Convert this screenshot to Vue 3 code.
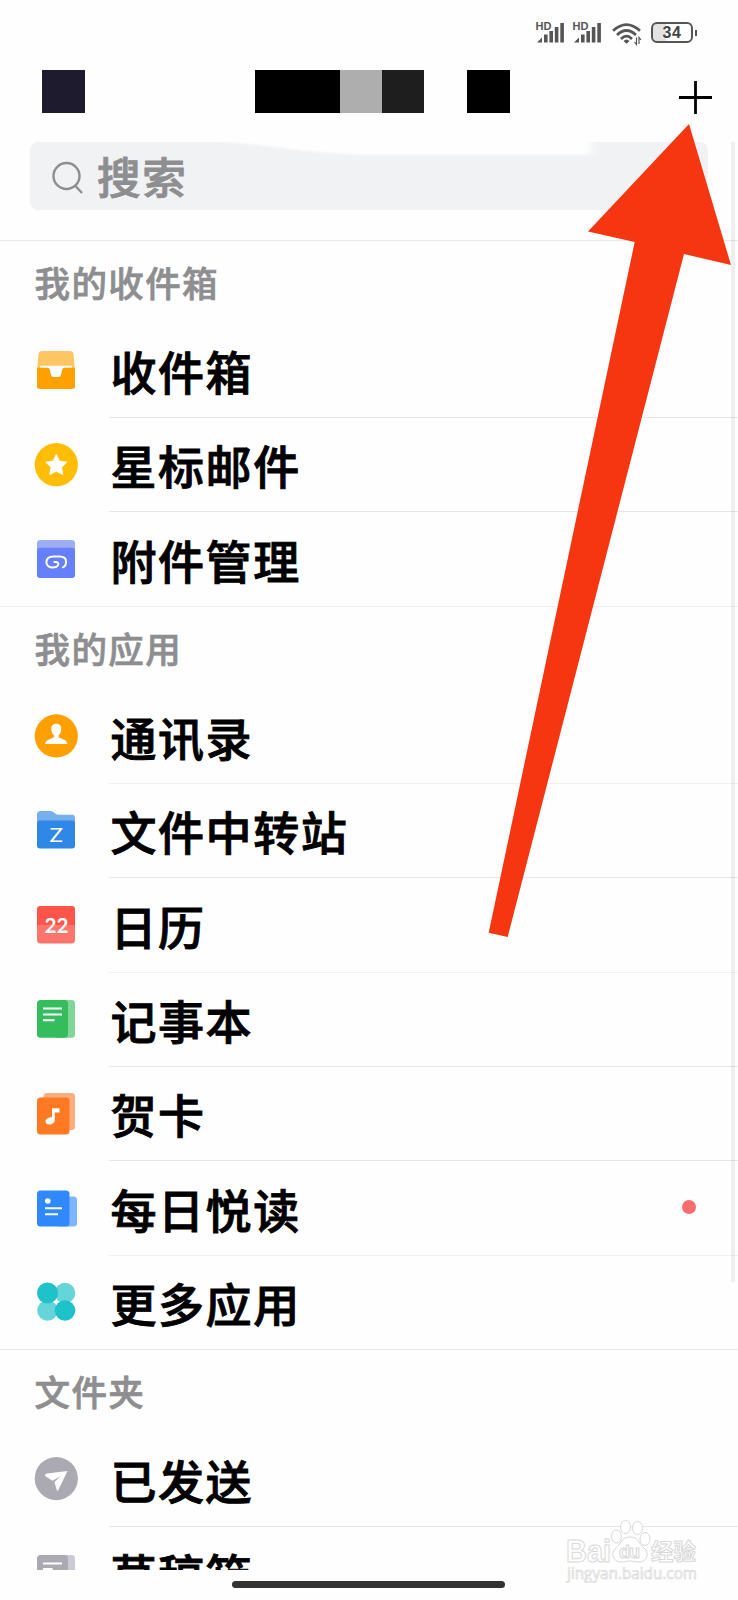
<template>
  <div class="mail-page">
    <!-- 状态栏 -->
    <div class="status-bar">
      <svg v-for="n in 2" :key="n" class="signal" viewBox="0 0 28 22">
        <text x="-0.5" y="8" class="hd" textLength="16" lengthAdjust="spacingAndGlyphs">HD</text>
        <path d="M1 20.500 6 15.500v5z" />
        <rect x="8" y="12.500" width="3.600" height="8" />
        <rect x="13.400" y="9" width="3.600" height="11.500" />
        <rect x="18.800" y="5" width="3.600" height="15.500" />
        <rect x="24.300" y="1" width="3.600" height="19.500" />
      </svg>
      <svg class="wifi" viewBox="0 0 30 24">
        <g fill="none" stroke="#555" stroke-width="2.700">
          <path d="M1 8.700Q14.500-3.500 28 8.700" />
          <path d="M5 13Q14.500 4 24 13" />
          <path d="M9 17Q14.500 11.500 20 17" />
        </g>
        <path d="M11.500 19q3-3 6 0l-3 2.800z" />
        <path d="M24.500 15.500v7l-2-2.500M27 22v-6.500l2 2.500" fill="none" stroke="#555" stroke-width="1.200" />
      </svg>
      <div class="battery"><span>34</span></div>
    </div>

    <!-- 顶部导航 -->
    <div class="nav-bar">
      <div class="block avatar"></div>
      <div class="account">
        <div class="block wide"></div>
        <div class="block light"></div>
        <div class="block dark"></div>
      </div>
      <div class="block tail"></div>
      <button class="add-btn">
        <svg viewBox="0 0 33 33"><path d="M16.500 0v33M0 16.500h33" stroke="#000" stroke-width="2.800" /></svg>
      </button>
    </div>

    <!-- 搜索框 -->
    <div class="search-wrap">
      <div class="search-box">
        <svg class="search-icon" viewBox="0 0 32 34">
          <circle cx="14.500" cy="15" r="13" />
          <path d="M23 24.500l7 7.500" />
        </svg>
        <span>搜索</span>
        <svg class="search-fade" viewBox="0 0 400 16">
          <defs>
            <filter id="soft" x="-5%" y="-50%" width="110%" height="200%"><feGaussianBlur stdDeviation="5 1" /></filter>
          </defs>
          <path d="M0-6H376V12.800H150Q100 11 60 5Q30 1 0-1z" fill="#fefefe" filter="url(#soft)" />
        </svg>
      </div>
    </div>

    <!-- 列表 -->
    <div class="list">
      <section v-for="section in sections" :key="section.title">
        <h2 class="section-title">{{ section.title }}</h2>
        <div v-for="(item, i) in section.items" :key="item.icon" class="row" :class="{ last: i === section.items.length - 1, faint: item.faint }">
          <svg class="icon" viewBox="0 0 44 44">
            <g v-if="item.icon === 'inbox'">
              <path d="M8 3h28q3 0 3.500 3l1.500 17H3L4.500 6Q5 3 8 3z" fill="#ffc562" />
              <path d="M5.500 17.800h33l-4 12H10z" fill="#fff" />
              <path d="M3 19.700h10.500q1.800 0 2.300 2l1.200 5.300q.5 2 2.500 2h5q2 0 2.500-2l1.200-5.300q.5-2 2.300-2H41V38q0 3-3 3H6q-3 0-3-3z" fill="#ff9f00" />
            </g>
            <g v-else-if="item.icon === 'star'">
              <circle cx="22.300" cy="21.700" r="21.600" fill="#ffbd05" />
              <path d="M22.300 11.500l3.200 6.700 7.300 1-5.300 5.100 1.300 7.300-6.500-3.500-6.500 3.500 1.300-7.300-5.300-5.100 7.300-1z" fill="#fff" stroke="#fff" stroke-width="1" stroke-linejoin="round" />
            </g>
            <g v-else-if="item.icon === 'attach'">
              <rect x="3" y="3" width="38" height="22" rx="3.500" fill="#9eadf6" />
              <path d="M3 14q0-3.200 3-3.200h32q3 0 3 3.200v24q0 3-3 3H6q-3 0-3-3z" fill="#6580fa" />
              <path d="M20.500 25c3-.5 4.300.8 3.800 2.600-.7 2.500-3.500 3-6.300 2.900-3.500-.2-5.800-2.500-5.600-5.600.3-3.600 3.200-5.400 7.100-5.400h6c4.200 0 6.600 2 6.600 5.300 0 2.700-1.300 4.700-3.200 5.500" fill="none" stroke="#fff" stroke-width="2" stroke-linecap="round" />
            </g>
            <g v-else-if="item.icon === 'contacts'">
              <circle cx="22.300" cy="21.900" r="21.600" fill="#ff9f00" />
              <path d="M22.300 9.800c-3.200 0-5.200 2.200-5 5.500.2 3 1.200 4.700 2.700 6v1.600c0 1.400-8.800 2-9 7.200h22.600c-.2-5.200-9-5.800-9-7.200v-1.600c1.500-1.300 2.500-3 2.700-6 .2-3.300-1.800-5.500-5-5.500z" fill="#fff" />
            </g>
            <g v-else-if="item.icon === 'folder'">
              <path d="M3 6.500Q3 3 6.500 3H16q2 0 3.500 1.200l2.300 1.800q1 .8 2.500.8H38q3 0 3 3V20H3z" fill="#75afec" />
              <path d="M3 15.500Q3 12.400 6 12.400h32q3 0 3 3.100v22q0 3-3 3H6q-3 0-3-3z" fill="#2f88e5" />
              <text x="15.500" y="33.500" class="letter" textLength="13.500" lengthAdjust="spacingAndGlyphs">Z</text>
            </g>
            <g v-else-if="item.icon === 'calendar'">
              <rect x="3" y="3" width="38" height="37.500" rx="3.500" fill="#ff756c" />
              <path d="M3 22V6.500Q3 3 6.500 3h31Q41 3 41 6.500V22z" fill="#ff544a" />
              <text x="10.500" y="30" class="date" textLength="24" lengthAdjust="spacingAndGlyphs">22</text>
            </g>
            <g v-else-if="item.icon === 'notes'">
              <rect x="20" y="2.900" width="21" height="37.800" rx="3.500" fill="#81d599" />
              <rect x="3" y="2.900" width="31" height="37.800" rx="3.500" fill="#35bd5d" />
              <path d="M9 11.500h19M9 17.500h19M9 23.200h11.500" stroke="#fff" stroke-width="2" />
            </g>
            <g v-else-if="item.icon === 'card'">
              <rect x="9.500" y="1" width="31.500" height="37" rx="3.500" fill="#fbae7d" />
              <rect x="3" y="5.500" width="32.500" height="37" rx="3.500" fill="#ff7822" />
              <path d="M18 16.200h7.500v4.300h-4.700v7.800c0 2.400-2.500 4.300-5.300 4.300-2.400 0-4-1.300-4-3.200 0-2.500 2.500-4.200 6.500-4.200z" fill="#fff" />
            </g>
            <g v-else-if="item.icon === 'daily'">
              <rect x="22" y="10.500" width="21" height="30" rx="3.500" fill="#7db5ff" />
              <rect x="3" y="4.500" width="32.500" height="36" rx="3.500" fill="#3089fc" />
              <circle cx="13.800" cy="15" r="2.800" fill="#fff" />
              <path d="M11 22.200h17M11 28.200h13" stroke="#fff" stroke-width="2" />
            </g>
            <g v-else-if="item.icon === 'more'">
              <circle cx="31" cy="13" r="10.300" fill="#65d5d9" />
              <circle cx="13.500" cy="30.500" r="10.300" fill="#65d5d9" />
              <circle cx="13.500" cy="13" r="10.500" fill="#20c2ca" />
              <circle cx="31" cy="30.500" r="10.300" fill="#20c2ca" />
            </g>
            <g v-else-if="item.icon === 'sent'">
              <circle cx="22.300" cy="21.600" r="21.600" fill="#abaab3" />
              <path d="M11 18.500Q11 16.800 13 16.500L33.500 14 24.300 33q-1 1.500-1.700-.2l-2.100-7.700 6.200-6.100-8.200 4.700-6.700-4.200q-.8-.4-.8-1z" fill="#fff" />
            </g>
            <g v-else>
              <rect x="20" y="3" width="21" height="38" rx="3.500" fill="#cccbd5" />
              <rect x="3" y="3" width="31" height="38" rx="3.500" fill="#abaab3" />
              <path d="M9 11.500h19M9 17h9.500" stroke="#fff" stroke-width="2.200" />
            </g>
          </svg>
          <div class="row-body">
            <span class="label">{{ item.label }}</span>
            <i v-if="item.dot" class="dot"></i>
          </div>
        </div>
      </section>
    </div>

    <div class="home-area"><div class="home-bar"></div></div>

    <div class="scrollbar"></div>

    <!-- 指向添加按钮的箭头 -->
    <svg class="arrow" viewBox="0 0 738 1600">
      <path d="M689 124 731 265 684 254 507.700 937 488.700 932.700 634.700 242 588 231.500z" fill="#f63611" />
    </svg>

    <!-- 水印 -->
    <svg class="watermark" viewBox="0 0 140 66">
      <text x="1" y="45" class="wm-logo" textLength="45" lengthAdjust="spacingAndGlyphs">Bai</text>
      <path d="M65 20c8 0 9 7 14 11 6 5 3 14-5 14-4 0-6-1-9-1s-5 1-9 1c-8 0-11-9-5-14 5-4 6-11 14-11z" />
      <ellipse cx="51.500" cy="19.500" rx="5" ry="6.500" />
      <ellipse cx="60.500" cy="10" rx="5" ry="6.500" />
      <ellipse cx="72.500" cy="11" rx="5" ry="6.500" />
      <ellipse cx="80" cy="22" rx="5" ry="6.500" />
      <text x="54" y="41" class="wm-du" textLength="21">du</text>
      <text x="86" y="43" class="wm-cn" textLength="45">经验</text>
      <text x="2" y="62" class="wm-url" textLength="130" lengthAdjust="spacingAndGlyphs">jingyan.baidu.com</text>
    </svg>
  </div>
</template>

<script setup>
import { ref } from 'vue'

// faint: 分隔线颜色较浅
const sections = ref([
  {
    title: '我的收件箱',
    items: [
      { icon: 'inbox', label: '收件箱' },
      { icon: 'star', label: '星标邮件' },
      { icon: 'attach', label: '附件管理', faint: true }
    ]
  },
  {
    title: '我的应用',
    items: [
      { icon: 'contacts', label: '通讯录', faint: true },
      { icon: 'folder', label: '文件中转站' },
      { icon: 'calendar', label: '日历', faint: true },
      { icon: 'notes', label: '记事本' },
      { icon: 'card', label: '贺卡' },
      { icon: 'daily', label: '每日悦读', dot: true, faint: true },
      { icon: 'more', label: '更多应用' }
    ]
  },
  {
    title: '文件夹',
    items: [
      { icon: 'sent', label: '已发送' },
      { icon: 'draft', label: '草稿箱' }
    ]
  }
])
</script>

<style>
body {
  margin: 0;
  background: #fefefe;
}
</style>

<style scoped>
.mail-page {
  position: relative;
  display: flex;
  flex-direction: column;
  width: 738px;
  height: 1600px;
  overflow: hidden;
  background: #fefefe;
  font-family: 'Noto Sans CJK SC', sans-serif;
}

.status-bar {
  display: flex;
  align-items: flex-start;
  justify-content: flex-end;
  height: 48px;
  padding: 22px 41px 0 0;
}

.status-bar svg {
  fill: #555;
}

.signal {
  width: 28px;
  height: 22px;
  margin-right: 9px;
  overflow: visible;
}

.hd {
  font: bold 11px 'Liberation Sans', sans-serif;
}

.wifi {
  width: 30px;
  height: 24px;
  margin: 0 9px 0 2px;
}

.battery {
  position: relative;
  display: flex;
  align-items: center;
  justify-content: center;
  width: 38px;
  height: 17px;
  margin-right: 4px;
  border: 2px solid #555;
  border-radius: 6px;
  background: linear-gradient(90deg, #e3e3e3 34%, #fff 34%);
  font: bold 16px 'Liberation Sans', sans-serif;
  letter-spacing: 0.5px;
  color: #444;
}

.battery::after {
  content: '';
  position: absolute;
  right: -6px;
  top: 6px;
  width: 2px;
  height: 6px;
  background: #555;
}

.nav-bar {
  display: flex;
  align-items: flex-start;
  height: 72px;
  padding: 0 26px 0 42px;
}

.block {
  width: 43px;
  height: 43px;
  background: #000;
}

.avatar {
  background: #1e1b2e;
}

.account {
  display: flex;
  margin-left: 170px;
}

.wide {
  width: 85px;
}

.light {
  width: 42px;
  background: #aeaeae;
}

.dark {
  width: 42px;
  background: #1e1e1e;
}

.tail {
  margin-left: 43px;
}

.add-btn {
  width: 33px;
  height: 33px;
  margin: 11px 0 0 auto;
  padding: 0;
  border: none;
  background: none;
}

.add-btn svg {
  display: block;
}

.search-wrap {
  height: 98px;
  padding: 0 30px;
  border-bottom: 1px solid #e8e8e8;
}

.search-box {
  position: relative;
  display: flex;
  align-items: center;
  height: 68px;
  padding-left: 22px;
  border-radius: 8px;
  background: #f1f2f4;
  color: #8e8e91;
  font-size: 43.5px;
  font-weight: 500;
  letter-spacing: 1.8px;
  line-height: 64px;
  overflow: hidden;
  -webkit-text-stroke: 0.9px #8e8e91;
}

.search-icon {
  width: 32px;
  height: 34px;
  margin: 3px 13px 0 0;
  fill: none;
  stroke: #8e8e91;
  stroke-width: 2.4;
}

.search-fade {
  position: absolute;
  left: 185px;
  top: 0;
  width: 400px;
  height: 16px;
}

.list {
  flex: 1;
  min-height: 0;
  overflow: hidden;
}

.section-title {
  box-sizing: border-box;
  height: 82.6px;
  margin: 0;
  padding-left: 34.5px;
  font-size: 35.5px;
  font-weight: 500;
  letter-spacing: 1.4px;
  line-height: 82px;
  color: #8e8e91;
  -webkit-text-stroke: 0.7px #8e8e91;
}

.row {
  position: relative;
  display: flex;
  align-items: center;
  box-sizing: border-box;
  height: 94.4px;
  padding: 0 0 0 34px;
}

.row::after {
  content: '';
  position: absolute;
  left: 109px;
  right: 0;
  bottom: 0;
  height: 1px;
  background: #e6e6e6;
}

.row.last::after {
  left: 0;
}

.row.faint::after {
  background: #f1f1f1;
}

.icon {
  width: 44px;
  height: 44px;
  margin-bottom: 1px;
  flex: none;
}

.letter {
  font: 20px Lato, sans-serif;
  fill: #fff;
}

.date {
  font: bold 21.5px Lato, sans-serif;
  fill: #fff;
}

.row-body {
  flex: 1;
  display: flex;
  align-items: center;
  justify-content: space-between;
  padding: 0 42.5px 1.6px 32.4px;
}

.label {
  font-size: 46px;
  font-weight: 500;
  letter-spacing: 1.6px;
  line-height: 66px;
  color: #000;
  -webkit-text-stroke: 0.9px #000;
}

.dot {
  width: 14px;
  height: 14px;
  margin-bottom: 1px;
  border-radius: 50%;
  background: #f96c6c;
}

.home-area {
  display: flex;
  padding-left: 232px;
  height: 30px;
}

.home-bar {
  width: 273px;
  height: 7px;
  margin-top: 11px;
  border-radius: 4px;
  background: #333;
}

.scrollbar {
  position: absolute;
  left: 731px;
  top: 142px;
  width: 4px;
  height: 1140px;
  background: rgba(0, 0, 0, 0.06);
}

.arrow {
  position: absolute;
  left: 0;
  top: 0;
  width: 738px;
  height: 1600px;
  pointer-events: none;
}

.watermark {
  position: absolute;
  left: 565px;
  top: 1517px;
  width: 140px;
  height: 66px;
  fill: #fff;
  stroke: #d8d8d8;
  stroke-width: 1;
}

.wm-logo {
  font: bold 31px 'Liberation Sans', sans-serif;
}

.wm-du {
  font: bold 18px 'Liberation Sans', sans-serif;
}

.wm-cn {
  font: bold 22.5px 'Noto Sans CJK SC', sans-serif;
}

.wm-url {
  font: 16px 'Open Sans', sans-serif;
  stroke-width: 0.7;
}
</style>
